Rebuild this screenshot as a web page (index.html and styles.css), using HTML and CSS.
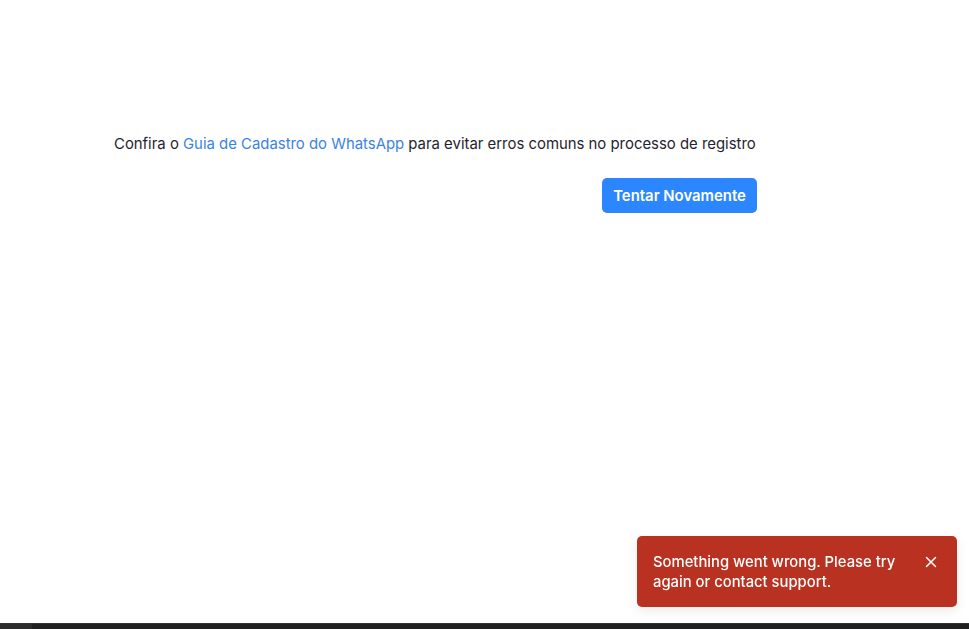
FILE: index.html
```html
<!DOCTYPE html>
<html lang="pt">
<head>
<meta charset="utf-8">
<title>Cadastro</title>
<link rel="stylesheet" href="styles.css">
</head>
<body>
<main class="page">
  <section class="content">
    <p class="hint">Confira o <a class="link" href="#">Guia de Cadastro do WhatsApp</a> para evitar erros comuns no processo de registro</p>
    <div class="actions">
      <button class="btn-primary" type="button">Tentar Novamente</button>
    </div>
  </section>
</main>
<div class="toast" role="alert">
  <span class="toast-text">Something went wrong. Please try again or contact support.</span>
  <button class="toast-close" type="button" aria-label="Close">
    <svg width="12" height="12" viewBox="0 0 12 12" fill="none" stroke="#fff" stroke-width="1.5" stroke-linecap="round"><path d="M1.5 1.5l9 9M10.5 1.5l-9 9"/></svg>
  </button>
</div>
<div class="bottom-bar"><div class="bottom-thumb"></div></div>
</body>
</html>
```
FILE: styles.css
```css
html, body {
  margin: 0;
  padding: 0;
  background: #ffffff;
  font-family: Inter, "Noto Sans", sans-serif;
  color: #1f2430;
}
.page {
  padding: 134px 0 0 114px;
}
.content {
  width: 643px;
}
.hint {
  margin: 0;
  font-size: 14.9px;
  line-height: 20px;
  white-space: nowrap;
  color: #1f2430;
}
.link {
  color: #3b82e6;
  text-decoration: none;
}
.actions {
  display: flex;
  justify-content: flex-end;
  margin-top: 24px;
}
.btn-primary {
  font-family: Inter, "Noto Sans", sans-serif;
  font-size: 14.9px;
  font-weight: 600;
  color: #ffffff;
  background: #2b86ff;
  border: none;
  border-radius: 5px;
  height: 35px;
  width: 155px;
  padding: 0;
  cursor: pointer;
}
.toast {
  position: fixed;
  left: 637px;
  top: 536px;
  width: 320px;
  height: 71px;
  box-sizing: border-box;
  background: #b93121;
  border-radius: 5px;
  box-shadow: 0 4px 12px rgba(0,0,0,0.08);
  display: flex;
  align-items: flex-start;
  padding: 16px 16px 0 16px;
  gap: 12px;
}
.toast-text {
  flex: 1;
  color: #ffffff;
  font-size: 14.8px;
  font-weight: 500;
  line-height: 20px;
}
.toast-close {
  background: none;
  border: none;
  padding: 0;
  margin-top: 4px;
  margin-right: 4px;
  width: 12px;
  height: 12px;
  display: flex;
}
.bottom-bar {
  position: fixed;
  left: 0;
  right: 0;
  bottom: 0;
  height: 5px;
  background: #202020;
  border-top: 1px solid #333;
}
.bottom-thumb {
  width: 32px;
  height: 100%;
  background: #2c2c2c;
}
```
